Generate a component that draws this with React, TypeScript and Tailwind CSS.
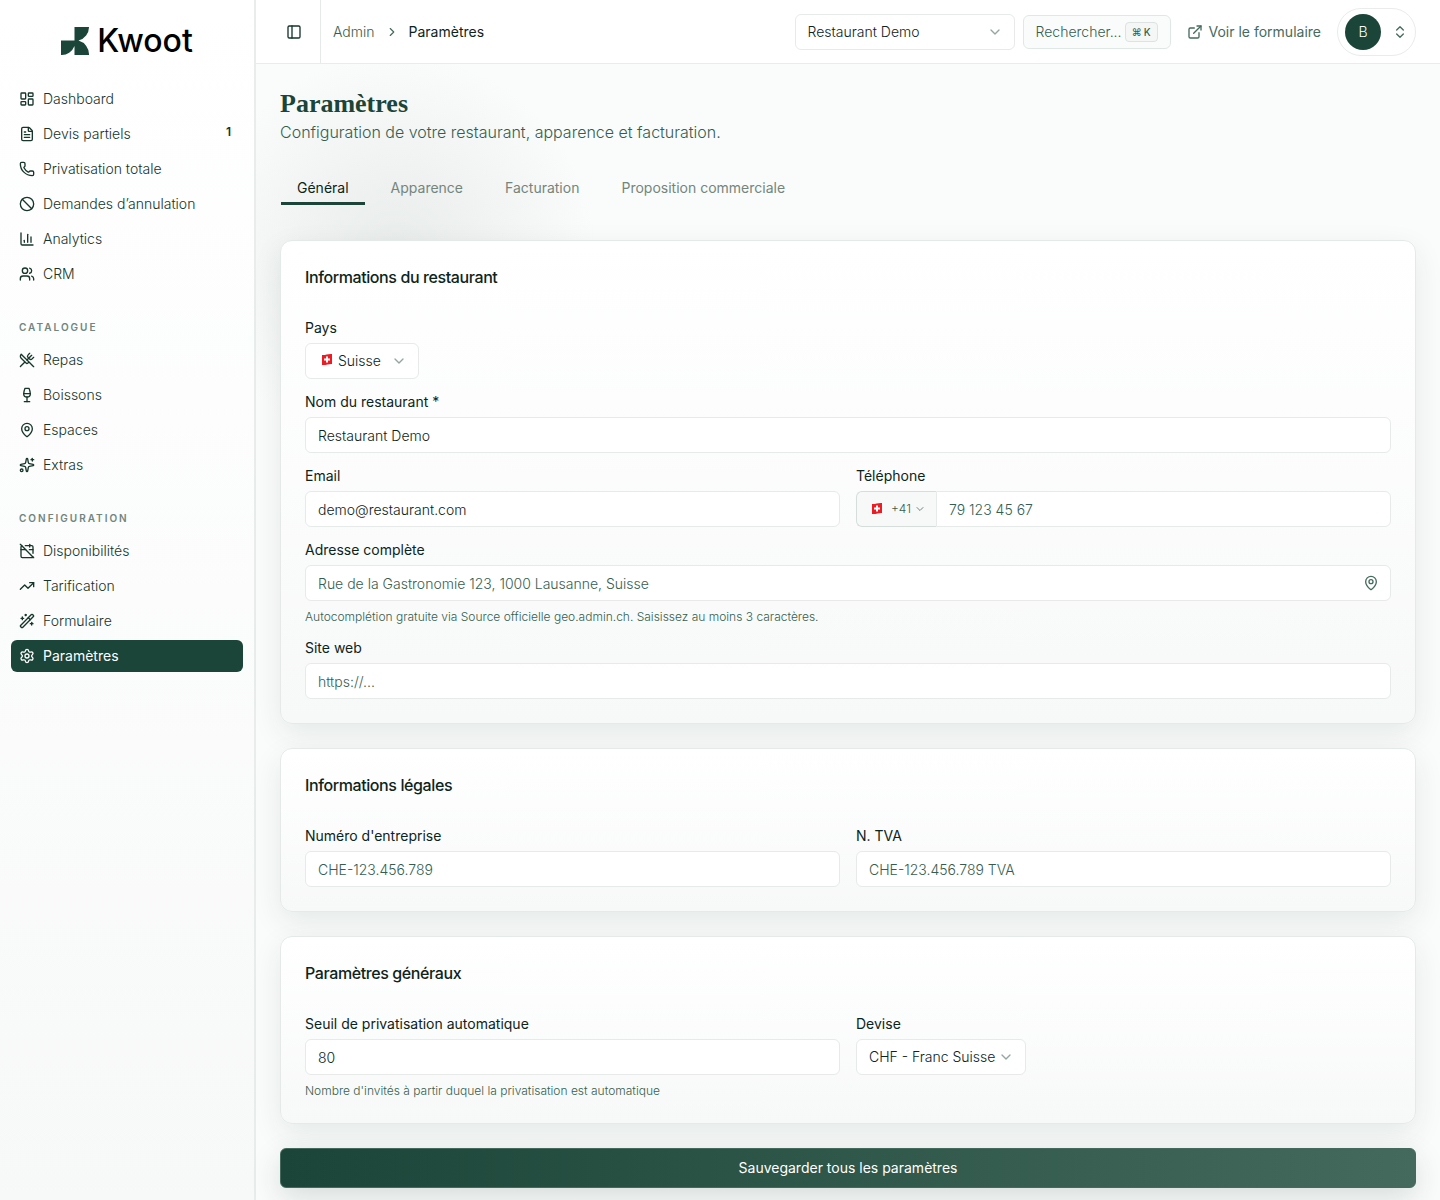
import type { ComponentType, InputHTMLAttributes, ReactNode, SelectHTMLAttributes } from "react";
import {
  Ban,
  CalendarOff,
  ChartColumn,
  ChevronDown,
  ChevronRight,
  ChevronsUpDown,
  ExternalLink,
  FileText,
  LayoutDashboard,
  MapPin,
  PanelLeft,
  Phone,
  Settings,
  Sparkles,
  TrendingUp,
  Users,
  UtensilsCrossed,
  WandSparkles,
  Wine,
} from "lucide-react";

type NavItem = {
  label: string;
  icon: ComponentType<{ className?: string }>;
  badge?: string;
  active?: boolean;
};

const mainNav: NavItem[] = [
  { label: "Dashboard", icon: LayoutDashboard },
  { label: "Devis partiels", icon: FileText, badge: "1" },
  { label: "Privatisation totale", icon: Phone },
  { label: "Demandes d’annulation", icon: Ban },
  { label: "Analytics", icon: ChartColumn },
  { label: "CRM", icon: Users },
];

const catalogueNav: NavItem[] = [
  { label: "Repas", icon: UtensilsCrossed },
  { label: "Boissons", icon: Wine },
  { label: "Espaces", icon: MapPin },
  { label: "Extras", icon: Sparkles },
];

const configNav: NavItem[] = [
  { label: "Disponibilités", icon: CalendarOff },
  { label: "Tarification", icon: TrendingUp },
  { label: "Formulaire", icon: WandSparkles },
  { label: "Paramètres", icon: Settings, active: true },
];

const tabs = ["Général", "Apparence", "Facturation", "Proposition commerciale"];

function Logo() {
  return (
    <a href="#" className="flex items-center justify-center gap-2">
      <svg viewBox="0 0 28 28" className="size-7" fill="#1a4538" aria-hidden="true">
        <path d="M13.5 0H28A14.5 14 0 0 1 17.500 13.600A14.500 14.500 0 0 1 28 28H13.500V19A14 14 0 0 1 0 28V13.500H13.500Z" />
      </svg>
      <span className="text-[32px] leading-10 font-medium text-black">Kwoot</span>
    </a>
  );
}

function SwissFlag() {
  return (
    <svg viewBox="0 0 12 13" className="h-[13px] w-3" aria-hidden="true">
      <path d="M1 2C4 2.500 7 0.500 11 1V11C8 10.500 5 12.500 1 12Z" fill="#ed1c24" />
      <path d="M5 3.500H7V5.500H9V7.500H7V9.500H5V7.500H3V5.500H5Z" fill="#fff" />
    </svg>
  );
}

function NavList({ items }: { items: NavItem[] }) {
  return (
    <ul className="flex flex-col gap-[3px]">
      {items.map(({ label, icon: Icon, badge, active }) => (
        <li key={label}>
          <a
            href="#"
            aria-current={active ? "page" : undefined}
            className={
              active
                ? "flex h-8 items-center gap-2 rounded-md bg-[#1a4538] px-2 text-sm text-white"
                : "flex h-8 items-center gap-2 rounded-md px-2 text-sm font-light text-[#16352b]"
            }
          >
            <Icon className="size-4" />
            <span>{label}</span>
            {badge && <span className="mr-1 mb-1 ml-auto text-xs font-semibold">{badge}</span>}
          </a>
        </li>
      ))}
    </ul>
  );
}

function NavGroup({ title, items }: { title: string; items: NavItem[] }) {
  return (
    <div className="mt-[21px]">
      <h2 className="mb-px flex h-8 items-center px-2 text-[10px] font-semibold tracking-[2px] text-[#70857d] uppercase">
        {title}
      </h2>
      <NavList items={items} />
    </div>
  );
}

function Card({ title, children }: { title: string; children: ReactNode }) {
  return (
    <section className="rounded-xl border border-[#e4eae8] bg-linear-to-b from-white to-[#f7f9f8] p-6 shadow-[0_10px_30px_rgba(15,42,34,0.09)]">
      <h2 className="mb-8 text-base leading-6 font-medium tracking-tight text-[#0d241c]">{title}</h2>
      <div className="flex flex-col gap-4">{children}</div>
    </section>
  );
}

function Field({ id, label, hint, children }: { id: string; label: string; hint?: string; children: ReactNode }) {
  return (
    <div className="flex flex-col items-start gap-2">
      <label htmlFor={id} className="text-sm leading-[14px] text-[#0d241c]">
        {label}
      </label>
      {children}
      {hint && <p className="text-xs leading-4 font-light text-[#365e50]">{hint}</p>}
    </div>
  );
}

function TextInput(props: InputHTMLAttributes<HTMLInputElement>) {
  return (
    <input
      {...props}
      className="h-9 w-full rounded-md border border-[#e6ebe9] bg-white px-3 text-sm font-light text-[#0d241c] placeholder:text-[#365e50]"
    />
  );
}

function Select({ className, children, ...props }: SelectHTMLAttributes<HTMLSelectElement>) {
  return (
    <div className="relative">
      <select
        {...props}
        className={`h-9 appearance-none rounded-md border border-[#e6ebe9] bg-white text-sm font-light text-[#0d241c] ${className}`}
      >
        {children}
      </select>
      <ChevronDown className="pointer-events-none absolute top-2.5 right-3 size-4 text-[#93a69f]" />
    </div>
  );
}

function Sidebar() {
  return (
    <aside className="w-64 shrink-0 border-r-2 border-[#e8eceb] bg-linear-to-b from-white to-[#f7f9f8] px-[11px] pt-[21px]">
      <Logo />
      <nav className="mt-[22px]">
        <NavList items={mainNav} />
        <NavGroup title="Catalogue" items={catalogueNav} />
        <NavGroup title="Configuration" items={configNav} />
      </nav>
    </aside>
  );
}

function Header() {
  return (
    <header className="flex h-16 items-center border-b border-[#e8eceb] bg-white pr-6 text-sm">
      <button type="button" aria-label="Menu" className="flex h-full w-[65px] items-center justify-end border-r border-[#e4eae8] pr-[18px] text-[#16352b]">
        <PanelLeft className="size-4" />
      </button>
      <nav className="flex items-center gap-2.5 pl-3">
        <a href="#" className="font-light text-[#365e50]">Admin</a>
        <ChevronRight className="size-3.5 text-[#456b5e]" />
        <span className="text-[#0d241c]">Paramètres</span>
      </nav>
      <div className="ml-auto flex items-center">
        <Select aria-label="Restaurant" className="w-[220px] px-3">
          <option>Restaurant Demo</option>
        </Select>
        <button type="button" className="ml-2 flex h-[34px] w-[148px] items-center justify-between rounded-md border border-[#dfe8e4] bg-[#fafcfb] px-3 font-light text-[#365e50]">
          Rechercher...
          <kbd className="flex h-5 items-center gap-0.5 rounded border border-[#dde3e1] bg-[#f5f7f6] px-1.5 font-['Inter','DejaVu_Sans',sans-serif] text-[10px] leading-4 font-medium">
            <span>⌘</span>
            <span>K</span>
          </kbd>
        </button>
        <a href="#" className="mx-4 flex items-center gap-1.5 text-[#456b5e]">
          <ExternalLink className="size-4" />
          Voir le formulaire
        </a>
        <button type="button" aria-label="Compte" className="flex h-12 w-[79px] items-center justify-between rounded-full border border-[#e8eceb] px-[7px]">
          <span className="flex size-9 items-center justify-center rounded-full bg-[#1a4538] font-light text-white">B</span>
          <ChevronsUpDown className="size-4 text-[#456b5e]" />
        </button>
      </div>
    </header>
  );
}

export default function App() {
  return (
    <div className="flex min-h-screen bg-[#fafcfb] font-['Inter','Liberation_Sans',sans-serif]">
      <Sidebar />
      <div className="flex min-w-0 flex-1 flex-col">
        <Header />
        <main className="flex-1 bg-[radial-gradient(circle_at_140px_190px,#e8ecea_0px,#eff2f1_80px,transparent_200px)] px-6 pt-6 pb-3">
          <h1 className="font-['Liberation_Serif',serif] text-[26px] leading-8 font-bold text-[#1a4538]">Paramètres</h1>
          <p className="text-base leading-6 font-light text-[#365e50]">
            Configuration de votre restaurant, apparence et facturation.
          </p>

          <div role="tablist" className="mt-[26px] flex gap-[10px] pl-px text-sm">
            {tabs.map((tab, i) => (
              <button
                key={tab}
                type="button"
                role="tab"
                aria-selected={i === 0}
                className={
                  i === 0
                    ? "border-b-3 border-[#1a4538] px-4 pt-2 pb-1 text-[#0d241c]"
                    : "border-b-3 border-transparent px-4 pt-2 pb-1 text-[#74857e]"
                }
              >
                {tab}
              </button>
            ))}
          </div>

          <form className="mt-[35px] flex flex-col gap-6">
            <Card title="Informations du restaurant">
              <Field id="pays" label="Pays">
                <div className="relative">
                  <Select id="pays" className="w-[114px] pl-8">
                    <option>Suisse</option>
                  </Select>
                  <span className="pointer-events-none absolute top-[10px] left-4">
                    <SwissFlag />
                  </span>
                </div>
              </Field>
              <Field id="nom" label="Nom du restaurant *">
                <TextInput id="nom" defaultValue="Restaurant Demo" />
              </Field>
              <div className="grid grid-cols-2 gap-4">
                <Field id="email" label="Email">
                  <TextInput id="email" type="email" defaultValue="demo@restaurant.com" />
                </Field>
                <Field id="telephone" label="Téléphone">
                  <div className="flex w-full">
                    <div className="relative">
                      <select
                        aria-label="Indicatif"
                        className="h-9 w-20 appearance-none rounded-l-md border border-r-0 border-[#d5dedb] bg-[#f7f9f8] pl-[34px] text-xs font-light text-[#365e50]"
                      >
                        <option>+41</option>
                      </select>
                      <span className="pointer-events-none absolute top-[11px] left-[15px]">
                        <SwissFlag />
                      </span>
                      <ChevronDown className="pointer-events-none absolute top-3 right-2.5 size-3 text-[#70857d]" />
                    </div>
                    <input
                      id="telephone"
                      type="tel"
                      placeholder="79 123 45 67"
                      className="h-9 min-w-0 flex-1 rounded-r-md border border-[#e6ebe9] bg-white px-3 text-sm font-light text-[#0d241c] placeholder:text-[#365e50]"
                    />
                  </div>
                </Field>
              </div>
              <Field
                id="adresse"
                label="Adresse complète"
                hint="Autocomplétion gratuite via Source officielle geo.admin.ch. Saisissez au moins 3 caractères."
              >
                <div className="relative w-full">
                  <TextInput id="adresse" placeholder="Rue de la Gastronomie 123, 1000 Lausanne, Suisse" />
                  <MapPin className="pointer-events-none absolute top-2.5 right-3 size-4 text-[#456b5e]" />
                </div>
              </Field>
              <Field id="site" label="Site web">
                <TextInput id="site" type="url" placeholder="https://..." />
              </Field>
            </Card>

            <Card title="Informations légales">
              <div className="grid grid-cols-2 gap-4">
                <Field id="numero" label="Numéro d'entreprise">
                  <TextInput id="numero" placeholder="CHE-123.456.789" />
                </Field>
                <Field id="tva" label="N. TVA">
                  <TextInput id="tva" placeholder="CHE-123.456.789 TVA" />
                </Field>
              </div>
            </Card>

            <Card title="Paramètres généraux">
              <div className="grid grid-cols-2 gap-4">
                <Field
                  id="seuil"
                  label="Seuil de privatisation automatique"
                  hint="Nombre d'invités à partir duquel la privatisation est automatique"
                >
                  <TextInput id="seuil" defaultValue="80" />
                </Field>
                <Field id="devise" label="Devise">
                  <Select id="devise" className="w-[170px] px-3">
                    <option>CHF - Franc Suisse</option>
                  </Select>
                </Field>
              </div>
            </Card>

            <button
              type="submit"
              className="h-10 rounded-md border border-[#446a5d] bg-linear-to-r from-[#1a4538] to-[#446a5d] text-sm text-white shadow-[0_10px_30px_rgba(15,42,34,0.15)]"
            >
              Sauvegarder tous les paramètres
            </button>
          </form>
        </main>
      </div>
    </div>
  );
}
